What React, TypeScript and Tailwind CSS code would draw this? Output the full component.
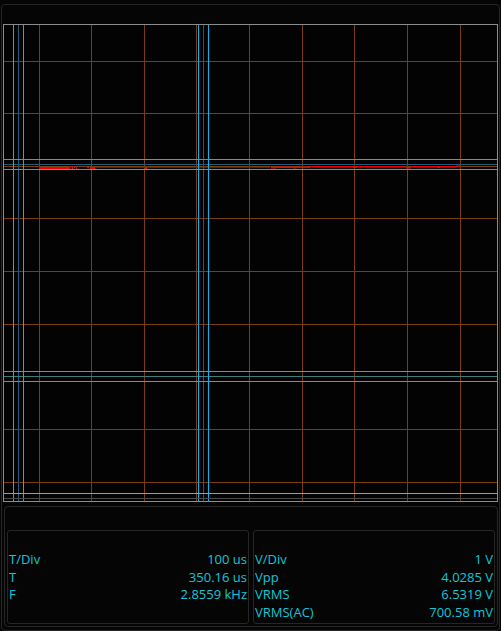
import React from "react";

const vX = [39, 91, 144, 196, 249, 302, 354, 407, 460];
const hY = [61, 113, 166, 218, 271, 324, 376, 429, 482];
const W = 495;
const H = 478;

// bright red segments: [x1, x2, y, h] in absolute page pixels
const bright: [number, number, number, number][] = [
  [39, 70, 167, 2],
  [70, 71, 166, 1], [72, 73, 167, 2], [74, 75, 166, 2], [76, 77, 167, 2],
  [87, 89, 167, 1], [90, 95, 167, 2],
  [145, 147, 167, 2],
  [270, 271, 166, 1], [271, 276, 167, 1.5],
  [276, 293, 166.5, 1.5], [293, 296, 167, 1.5],
  [296, 310, 166.5, 1.5], [310, 340, 166, 1.5],
  [340, 353, 166, 1.5], [353, 357, 166.5, 1.5],
  [357, 406, 166, 1.5], [406, 411, 167, 1.5],
  [411, 437, 166, 1.5], [437, 440, 166.5, 1.5],
  [440, 456, 166, 1.5], [456, 460, 165.5, 1.5],
];

function Scope() {
  const lx = (X: number) => X - 3 + 0.5;
  const ly = (Y: number) => Y - 24 + 0.5;
  const orange = "#7a3d0e";
  const cyan = "#0fb2f0";
  const dimCyan = "#1f5c7a";
  return (
    <svg width={W} height={H} viewBox={`0 0 ${W} ${H}`} className="block ml-px shrink-0">
      <rect x={0} y={0} width={W} height={H} fill="#030303" />
      {vX.map((x) => (
        <line key={"v" + x} x1={lx(x)} y1={0} x2={lx(x)} y2={H} stroke={orange} strokeWidth={1} />
      ))}
      {hY.map((y) => (
        <line key={"h" + y} x1={0} y1={ly(y)} x2={W} y2={ly(y)} stroke={orange} strokeWidth={1} />
      ))}
      <rect x={95 - 3} y={167 - 24} width={270 - 95} height={1} fill="#8a0808" />
      {bright.map(([x1, x2, y, h], i) => (
        <rect key={"r" + i} x={x1 - 3} y={y - 24} width={x2 - x1} height={h} fill="#f00000" />
      ))}
      {[18, 203].map((x) => (
        <line key={"dc" + x} x1={lx(x)} y1={0} x2={lx(x)} y2={H} stroke={dimCyan} strokeWidth={1} />
      ))}
      {[164, 376].map((y) => (
        <line key={"dch" + y} x1={0} y1={ly(y)} x2={W} y2={ly(y)} stroke={y === 376 ? "#3f7c80" : dimCyan} strokeWidth={1} />
      ))}
      {[13, 23, 198, 208].map((x) => (
        <line key={"c" + x} x1={lx(x)} y1={0} x2={lx(x)} y2={H} stroke={cyan} strokeWidth={1} />
      ))}
      {[159, 169, 371, 381].map((y) => (
        <line key={"ch" + y} x1={0} y1={ly(y)} x2={W} y2={ly(y)} stroke={cyan} strokeWidth={1} />
      ))}
      <line x1={0} y1={ly(493)} x2={W} y2={ly(493)} stroke="#9a9a9a" strokeWidth={1} />
      <line x1={0} y1={ly(498)} x2={W} y2={ly(498)} stroke="#4a4a4a" strokeWidth={1} />
      <rect x={0.5} y={0.5} width={W - 1} height={H - 1} fill="none" stroke="#8c8c8c" strokeWidth={1} />
    </svg>
  );
}

function Row({ label, value }: { label: string; value: string }) {
  return (
    <div className="flex justify-between h-[17.7px] leading-[17.7px]">
      <span>{label}</span>
      <span>{value}</span>
    </div>
  );
}

export default function App() {
  return (
    <div
      className="w-[501px] h-[631px] bg-[#050505] pt-[4px] pl-px overflow-hidden"
      style={{ fontFamily: '"Open Sans", "Noto Sans", sans-serif' }}
    >
      <div className="w-[499px] h-[627px] border border-[#262626] rounded-[4px] flex flex-col">
        <div className="h-[19px] shrink-0" />
        <Scope />
        <div className="h-[4px] shrink-0" />
        <div className="ml-[2px] w-[494px] h-[121px] shrink-0 border border-[#262626] rounded-[4px] pt-[23px] px-[2px] pb-[2px] flex gap-[4px]">
          {[
            [
              ["T/Div", "100 us"],
              ["T", "350.16 us"],
              ["F", "2.8559 kHz"],
            ],
            [
              ["V/Div", "1 V"],
              ["Vpp", "4.0285 V"],
              ["VRMS", "6.5319 V"],
              ["VRMS(AC)", "700.58 mV"],
            ],
          ].map((rows, i) => (
            <div
              key={i}
              className="w-[242px] h-[94px] border border-[#262626] rounded-[3px] pt-[20px] px-px text-[13px] text-[#12c6da]"
            >
              {rows.map(([l, v]) => (
                <Row key={l} label={l} value={v} />
              ))}
            </div>
          ))}
        </div>
      </div>
    </div>
  );
}
